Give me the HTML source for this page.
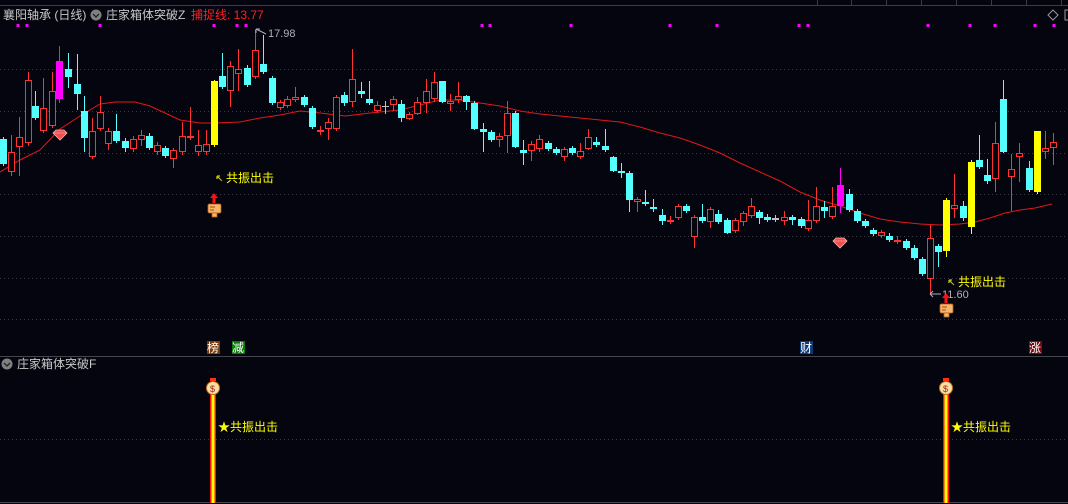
<!DOCTYPE html>
<html><head><meta charset="utf-8"><style>
html,body{margin:0;padding:0;background:#05050f;width:1068px;height:504px;overflow:hidden}
svg{display:block}
text{font-family:"Liberation Sans","Noto Sans CJK SC",sans-serif}
</style></head><body>
<svg id="s" width="1068" height="504" xmlns="http://www.w3.org/2000/svg">
<rect width="1068" height="504" fill="#05050f"/>
<g stroke="#3a3a44" stroke-dasharray="1,3" stroke-width="1">
<line x1="0" y1="69.5" x2="1068" y2="69.5"/><line x1="0" y1="111.5" x2="1068" y2="111.5"/>
<line x1="0" y1="153.5" x2="1068" y2="153.5"/><line x1="0" y1="194.5" x2="1068" y2="194.5"/>
<line x1="0" y1="236.5" x2="1068" y2="236.5"/><line x1="0" y1="278.5" x2="1068" y2="278.5"/>
<line x1="0" y1="319.5" x2="1068" y2="319.5"/><line x1="0" y1="439.5" x2="1068" y2="439.5"/>
</g>
<line x1="0" y1="5.5" x2="1068" y2="5.5" stroke="#3c3c44"/>
<g stroke="#3c3c44"><line x1="817.5" y1="0" x2="817.5" y2="5"/><line x1="851.5" y1="0" x2="851.5" y2="5"/><line x1="886.5" y1="0" x2="886.5" y2="5"/><line x1="921.5" y1="0" x2="921.5" y2="5"/><line x1="956.5" y1="0" x2="956.5" y2="5"/><line x1="991.5" y1="0" x2="991.5" y2="5"/><line x1="1026.5" y1="0" x2="1026.5" y2="5"/><line x1="1061.5" y1="0" x2="1061.5" y2="5"/></g>
<line x1="0" y1="356.5" x2="1068" y2="356.5" stroke="#45454d"/>
<line x1="0" y1="502.5" x2="1068" y2="502.5" stroke="#45454d"/>
<text x="3" y="19" font-size="12" fill="#c8c8c8">襄阳轴承 (日线)</text>
<circle cx="96" cy="15" r="5.5" fill="#808080"/><path d="M93 14l3 3 3-3" stroke="#222" fill="none" stroke-width="1.3"/>
<text x="106" y="19" font-size="12" fill="#c8c8c8">庄家箱体突破Z</text>
<text x="191" y="19" font-size="12" fill="#ff2020">捕捉线: 13.77</text>
<path d="M1053 10l5 5-5 5-5-5z" stroke="#999" fill="none"/>
<rect x="1065" y="10" width="6" height="10" stroke="#999" fill="none"/>
<circle cx="7" cy="364" r="5.5" fill="#808080"/><path d="M4 363l3 3 3-3" stroke="#222" fill="none" stroke-width="1.3"/>
<text x="17" y="368" font-size="12" fill="#c8c8c8">庄家箱体突破F</text>
<g id="c"></g>
</svg>
<script>
var C={r:"#ff3232",c:"#54ffff",y:"#ffff00",m:"#ff00ff",g:"#c0c0c0"};
var D=[[3,139,164,137,166,'c'],[11,152,172,135,176,'r'],[19,137,147,117,176,'r'],[28,80,143,72,146,'r'],[35,106,118,91,120,'c'],[43,108,131,78,133,'r'],[52,91,126,72,128,'r'],[59,61,99,46,103,'m'],[68,69,77,53,88,'c'],[77,84,94,54,110,'c'],[84,111,138,96,152,'c'],[92,131,157,118,159,'r'],[100,112,129,96,131,'r'],[108,131,144,128,150,'r'],[116,131,141,114,143,'c'],[125,141,148,138,152,'c'],[133,139,149,136,152,'r'],[141,135,140,130,146,'r'],[149,136,148,133,150,'c'],[157,145,152,142,155,'r'],[165,148,156,146,158,'c'],[173,150,159,148,168,'r'],[182,136,152,122,155,'r'],[190,136,138,107,140,'r'],[198,145,152,130,156,'r'],[206,144,152,130,155,'r'],[214,81,145,80,147,'y'],[222,76,87,53,89,'c'],[230,66,91,61,107,'r'],[238,69,74,49,91,'r'],[247,68,85,65,87,'c'],[255,50,77,30,79,'r'],[263,64,72,35,74,'c'],[272,78,103,76,105,'c'],[280,102,108,100,110,'r'],[287,99,106,96,108,'r'],[295,97,100,87,102,'r'],[304,97,105,95,107,'c'],[312,108,127,106,129,'c'],[320,130,132,126,135,'r'],[328,122,129,118,140,'r'],[336,97,129,95,131,'r'],
[344,95,103,92,106,'c'],[352,79,102,49,107,'r'],[361,91,94,82,98,'c'],[369,99,103,81,105,'c'],[377,105,111,101,113,'r'],[385,106,107,101,114,'g'],[393,99,105,96,111,'r'],[401,104,118,100,122,'c'],[409,114,119,112,120,'r'],[417,102,114,97,115,'r'],[426,91,103,79,113,'r'],[434,82,99,72,102,'r'],[442,81,102,81,103,'c'],[450,101,104,94,111,'r'],[458,96,100,82,103,'r'],[466,96,102,95,110,'c'],[474,103,129,101,130,'c'],[483,129,132,123,152,'c'],[491,132,140,130,142,'c'],[499,136,140,133,147,'r'],[507,113,136,101,153,'r'],[515,113,147,111,148,'c'],[523,150,153,140,165,'c'],[531,144,151,141,161,'r'],[539,139,149,135,152,'r'],[548,143,149,141,151,'c'],[556,149,153,147,155,'c'],[564,149,157,147,161,'r'],[572,148,153,146,155,'c'],[580,151,157,143,159,'r'],[588,137,149,129,150,'r'],[596,142,145,137,147,'c'],[605,146,150,129,152,'c'],[613,157,171,156,172,'c'],[621,171,173,163,178,'c'],[629,173,200,171,212,'c'],[637,199,202,197,212,'r'],[645,202,204,190,206,'c'],[653,207,209,199,212,'c'],[662,215,221,209,225,'c'],[670,220,222,216,224,'r'],[678,206,218,204,220,'r'],[686,206,211,204,213,'c'],[694,217,237,215,248,'r'],[702,217,221,204,223,'c'],[710,209,222,207,228,'r'],[718,214,222,210,224,'c'],[727,220,233,218,234,'c'],[735,220,231,218,233,'r'],[743,213,222,211,226,'r'],[751,206,216,198,218,'r'],[759,212,218,210,224,'c'],[767,217,220,214,222,'c'],[775,218,220,215,222,'g'],
[784,217,221,211,225,'r'],[792,217,220,215,225,'c'],[801,219,226,217,228,'c'],[808,220,229,200,231,'r'],[816,206,221,187,223,'r'],[824,207,211,201,218,'c'],[832,206,217,187,219,'r'],[840,185,206,168,213,'m'],[849,194,210,189,212,'c'],[857,211,221,209,223,'c'],[865,221,226,219,228,'c'],[873,230,234,228,236,'c'],[881,232,236,230,238,'r'],[889,236,240,233,242,'c'],[897,240,242,236,244,'r'],[906,241,248,239,250,'c'],[914,248,258,245,260,'c'],[922,259,274,257,276,'c'],[930,238,279,225,293,'r'],[938,246,252,244,267,'c'],[946,200,251,198,257,'y'],[954,205,209,174,218,'r'],[963,206,218,201,221,'c'],[971,162,227,160,234,'y'],[979,160,167,135,169,'c'],[987,175,181,159,184,'c'],[995,143,179,122,192,'r'],[1003,99,152,80,153,'c'],[1011,169,177,154,211,'r'],[1019,153,157,143,182,'r'],[1029,168,190,161,192,'c'],[1037,131,192,131,194,'y'],[1045,148,152,131,159,'r'],[1053,142,148,133,165,'r']];
var s='';
var ma=[[0,172],[20,160],[40,150],[60,129],[80,116],[100,104],[115,102],[135,102],[150,106],[165,113],[180,120],[200,123],[215,123],[240,122],[260,118],[280,115],[300,111],[320,113],[345,116],[370,113],[400,110],[420,105],[440,100],[460,100],[480,103],[500,106],[520,111],[540,114],[560,116],[580,118],[600,120],[620,122],[640,127],[660,133],[680,138],[700,145],[720,153],[740,163],[760,172],[780,181],[800,192],[820,200],[840,206],[860,213],[880,219],[900,222],[920,224],[940,225],[960,224],[975,222],[990,218],[1005,213],[1020,210],[1035,208],[1052,204]];
s+='<polyline fill="none" stroke="#e01818" stroke-width="1" points="'+ma.map(function(p){return p.join(',')}).join(' ')+'"/>';
D.forEach(function(d){var x=d[0],t=d[1],b=d[2],h=d[3],l=d[4],k=d[5],col=C[k];
 s+='<line x1="'+(x+.5)+'" y1="'+h+'" x2="'+(x+.5)+'" y2="'+l+'" stroke="'+col+'"/>';
 if(b-t<2){s+='<line x1="'+(x-3)+'" y1="'+(t+.5)+'" x2="'+(x+4)+'" y2="'+(t+.5)+'" stroke="'+col+'"/>';}
 else if(k=='r'){s+='<rect x="'+(x-2.5)+'" y="'+(t+.5)+'" width="6" height="'+(b-t-1)+'" fill="#05050f" stroke="'+col+'"/>';}
 else{s+='<rect x="'+(x-3)+'" y="'+t+'" width="7" height="'+(b-t)+'" fill="'+col+'"/>';}
});
[18,27,100,214,237,246,482,490,571,670,717,799,808,928,970,995,1035,1054].forEach(function(x){s+='<rect x="'+(x-1.5)+'" y="24" width="3" height="3" fill="#ff00ff"/>';});
function gem(x,y){return '<path d="M'+(x-7)+' '+y+'l3-3h8l3 3-7 7z" fill="#f05050" stroke="#ffb0b0" stroke-width=".8"/><path d="M'+(x-7)+' '+y+'h14" stroke="#ffb0b0" stroke-width=".6"/>';}
s+=gem(60,133)+gem(840,241);
s+='<text x="268" y="37" font-size="11" fill="#b0b0b8">17.98</text><path d="M256 29l10 5M256 29v4M256 29h4" stroke="#b0b0b8" fill="none"/>';
s+='<text x="942" y="298" font-size="11" fill="#b0b0b8">11.60</text><path d="M930 294h11M930 294l3-3M930 294l3 3" stroke="#b0b0b8" fill="none"/>';
function go(x,y){return '<path d="M'+x+' '+y+'l3 3M'+x+' '+y+'v3M'+x+' '+y+'h3" stroke="#ffff00" fill="none"/><line x1="'+x+'" y1="'+y+'" x2="'+(x+5)+'" y2="'+(y+5)+'" stroke="#c0c000"/><text x="'+(x+9)+'" y="'+(y+6)+'" font-size="12" fill="#ffff00">共振出击</text>';}
s+=go(217,176)+go(949,280);
function hand(x,y){return '<path d="M'+x+' '+y+'l-4 5h2.5v5h3v-5h2.5z" fill="#ff1010"/><rect x="'+(x-6)+'" y="'+(y+11)+'" width="13" height="9" rx="1.5" fill="#f7b56a" stroke="#b06020" stroke-width=".8"/><rect x="'+(x-2)+'" y="'+(y+20)+'" width="5" height="4" fill="#f7b56a" stroke="#b06020" stroke-width=".8"/><path d="M'+(x-4)+' '+(y+14)+'h5M'+(x-4)+' '+(y+17)+'h4" stroke="#a05010"/>';}
s+=hand(214,193)+hand(946,293);
function lab(x,bg,ch,fg){return '<rect x="'+(x-6)+'" y="341" width="13" height="13" fill="'+bg+'"/><text x="'+(x-6)+'" y="352" font-size="12" fill="'+fg+'">'+ch+'</text>';}
s+=lab(213,'#7a3a08','榜','#fff')+lab(238,'#0a7a0a','减','#fff')+lab(806,'#0a3a7a','财','#fff')+lab(1035,'#7a0a0a','涨','#fff');
function bar(x){return '<rect x="'+(x-3)+'" y="394" width="6" height="109" fill="#ff1010"/><rect x="'+(x-1.5)+'" y="394" width="3" height="109" fill="#ffff00"/>'+
'<rect x="'+(x-3)+'" y="378" width="6" height="3" fill="#ff3010"/><circle cx="'+x+'" cy="388" r="6.5" fill="#f7e0a0" stroke="#c07020"/><text x="'+(x-3)+'" y="392" font-size="9" fill="#a02020">$</text>'+
'<text x="'+(x+5)+'" y="431" font-size="12" fill="#ffff00">★共振出击</text>';}
s+=bar(213)+bar(946);
document.getElementById('c').innerHTML=s;
</script>
</body></html>
